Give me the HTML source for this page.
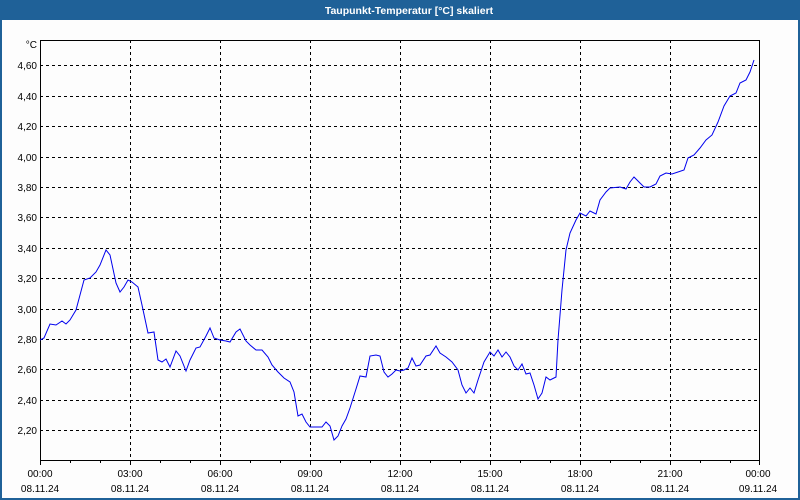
<!DOCTYPE html>
<html><head><meta charset="utf-8"><style>
html,body{margin:0;padding:0;width:800px;height:500px;overflow:hidden;background:#fdfdfd}
svg{display:block}
text{font-family:"Liberation Sans",sans-serif;font-size:10px;fill:#000}
</style></head><body>
<svg width="800" height="500" xmlns="http://www.w3.org/2000/svg">
<rect x="0" y="0" width="800" height="500" fill="#1f6198"/>
<rect x="2" y="20" width="796" height="478" fill="#fdfdfd"/>
<text x="409" y="14" text-anchor="middle" style="font-weight:bold;font-size:10.5px;fill:#fff">Taupunkt-Temperatur [°C] skaliert</text>
<g stroke="#000" stroke-width="1" stroke-dasharray="3,3" shape-rendering="crispEdges">
<line x1="40" y1="65.5" x2="760" y2="65.5"/><line x1="40" y1="96.5" x2="760" y2="96.5"/>
<line x1="40" y1="126.5" x2="760" y2="126.5"/><line x1="40" y1="157.5" x2="760" y2="157.5"/>
<line x1="40" y1="187.5" x2="760" y2="187.5"/><line x1="40" y1="217.5" x2="760" y2="217.5"/>
<line x1="40" y1="248.5" x2="760" y2="248.5"/><line x1="40" y1="278.5" x2="760" y2="278.5"/>
<line x1="40" y1="309.5" x2="760" y2="309.5"/><line x1="40" y1="339.5" x2="760" y2="339.5"/>
<line x1="40" y1="369.5" x2="760" y2="369.5"/><line x1="40" y1="400.5" x2="760" y2="400.5"/>
<line x1="40" y1="430.5" x2="760" y2="430.5"/>
<line x1="130.5" y1="40" x2="130.5" y2="460"/><line x1="220.5" y1="40" x2="220.5" y2="460"/>
<line x1="310.5" y1="40" x2="310.5" y2="460"/><line x1="400.5" y1="40" x2="400.5" y2="460"/>
<line x1="490.5" y1="40" x2="490.5" y2="460"/><line x1="580.5" y1="40" x2="580.5" y2="460"/>
<line x1="670.5" y1="40" x2="670.5" y2="460"/>
</g>
<rect x="40.5" y="40.5" width="719" height="420" fill="none" stroke="#000" shape-rendering="crispEdges"/>
<g stroke="#000" shape-rendering="crispEdges">
<line x1="40.5" y1="460" x2="40.5" y2="465"/><line x1="70.5" y1="460" x2="70.5" y2="463"/><line x1="100.5" y1="460" x2="100.5" y2="463"/><line x1="130.5" y1="460" x2="130.5" y2="465"/><line x1="160.5" y1="460" x2="160.5" y2="463"/><line x1="190.5" y1="460" x2="190.5" y2="463"/><line x1="220.5" y1="460" x2="220.5" y2="465"/><line x1="250.5" y1="460" x2="250.5" y2="463"/><line x1="280.5" y1="460" x2="280.5" y2="463"/><line x1="310.5" y1="460" x2="310.5" y2="465"/><line x1="340.5" y1="460" x2="340.5" y2="463"/><line x1="370.5" y1="460" x2="370.5" y2="463"/><line x1="400.5" y1="460" x2="400.5" y2="465"/><line x1="430.5" y1="460" x2="430.5" y2="463"/><line x1="460.5" y1="460" x2="460.5" y2="463"/><line x1="490.5" y1="460" x2="490.5" y2="465"/><line x1="520.5" y1="460" x2="520.5" y2="463"/><line x1="550.5" y1="460" x2="550.5" y2="463"/><line x1="580.5" y1="460" x2="580.5" y2="465"/><line x1="610.5" y1="460" x2="610.5" y2="463"/><line x1="640.5" y1="460" x2="640.5" y2="463"/><line x1="670.5" y1="460" x2="670.5" y2="465"/><line x1="700.5" y1="460" x2="700.5" y2="463"/><line x1="730.5" y1="460" x2="730.5" y2="463"/><line x1="759.5" y1="460" x2="759.5" y2="465"/>
</g>
<g text-anchor="end">
<text x="37" y="48">°C</text>
<text x="37" y="69">4,60</text><text x="37" y="100">4,40</text><text x="37" y="130">4,20</text>
<text x="37" y="161">4,00</text><text x="37" y="191">3,80</text><text x="37" y="221">3,60</text>
<text x="37" y="252">3,40</text><text x="37" y="282">3,20</text><text x="37" y="313">3,00</text>
<text x="37" y="343">2,80</text><text x="37" y="373">2,60</text><text x="37" y="404">2,40</text>
<text x="37" y="434">2,20</text>
</g>
<g text-anchor="middle">
<text x="40" y="477">00:00</text><text x="40" y="492">08.11.24</text>
<text x="130" y="477">03:00</text><text x="130" y="492">08.11.24</text>
<text x="220" y="477">06:00</text><text x="220" y="492">08.11.24</text>
<text x="310" y="477">09:00</text><text x="310" y="492">08.11.24</text>
<text x="400" y="477">12:00</text><text x="400" y="492">08.11.24</text>
<text x="490" y="477">15:00</text><text x="490" y="492">08.11.24</text>
<text x="580" y="477">18:00</text><text x="580" y="492">08.11.24</text>
<text x="670" y="477">21:00</text><text x="670" y="492">08.11.24</text>
<text x="758" y="477">00:00</text><text x="758" y="492">09.11.24</text>
</g>
<polyline fill="none" stroke="#0000ee" stroke-width="1" points="40,340 44,338 50,324 56,325 62,321 66,324 70,320 76,310 80,295 84,280 90,278 96,272 100,265 106,250 110,255 116,283 120,292 124,287 128,280 132,282 138,287 142,305 148,333 154,332 158,360 162,362 166,359 170,367 176,351 180,356 186,371 190,360 196,348 200,347 206,336 210,328 214,338 220,340 226,341 230,342 236,332 240,329 246,341 250,345 256,350 262,350 268,357 272,365 278,372 284,378 290,382 294,392 298,416 302,414 306,422 310,427 316,427 322,427 326,422 330,426 334,440 338,436 342,426 346,419 350,408 356,389 360,376 366,377 370,356 376,355 380,356 384,372 388,377 392,374 396,370 400,371 404,370 408,368 412,358 416,366 420,365 426,356 430,355 436,346 440,353 446,357 452,362 458,370 462,385 466,393 470,388 474,393 478,380 484,362 490,352 494,356 498,350 502,357 506,352 510,357 514,366 518,370 522,364 526,374 530,373 534,385 538,399 542,393 546,377 550,380 556,377 558,340 562,290 566,250 570,233 576,220 580,213 586,216 590,211 596,214 600,200 606,192 610,188 620,187 626,189 630,182 634,177 640,183 644,187 650,187 656,184 660,176 666,173 672,174 678,172 684,170 688,158 694,155 700,148 706,140 712,135 718,122 724,106 730,96 736,93 740,83 746,80 750,72 754,60"/>
</svg>
</body></html>
